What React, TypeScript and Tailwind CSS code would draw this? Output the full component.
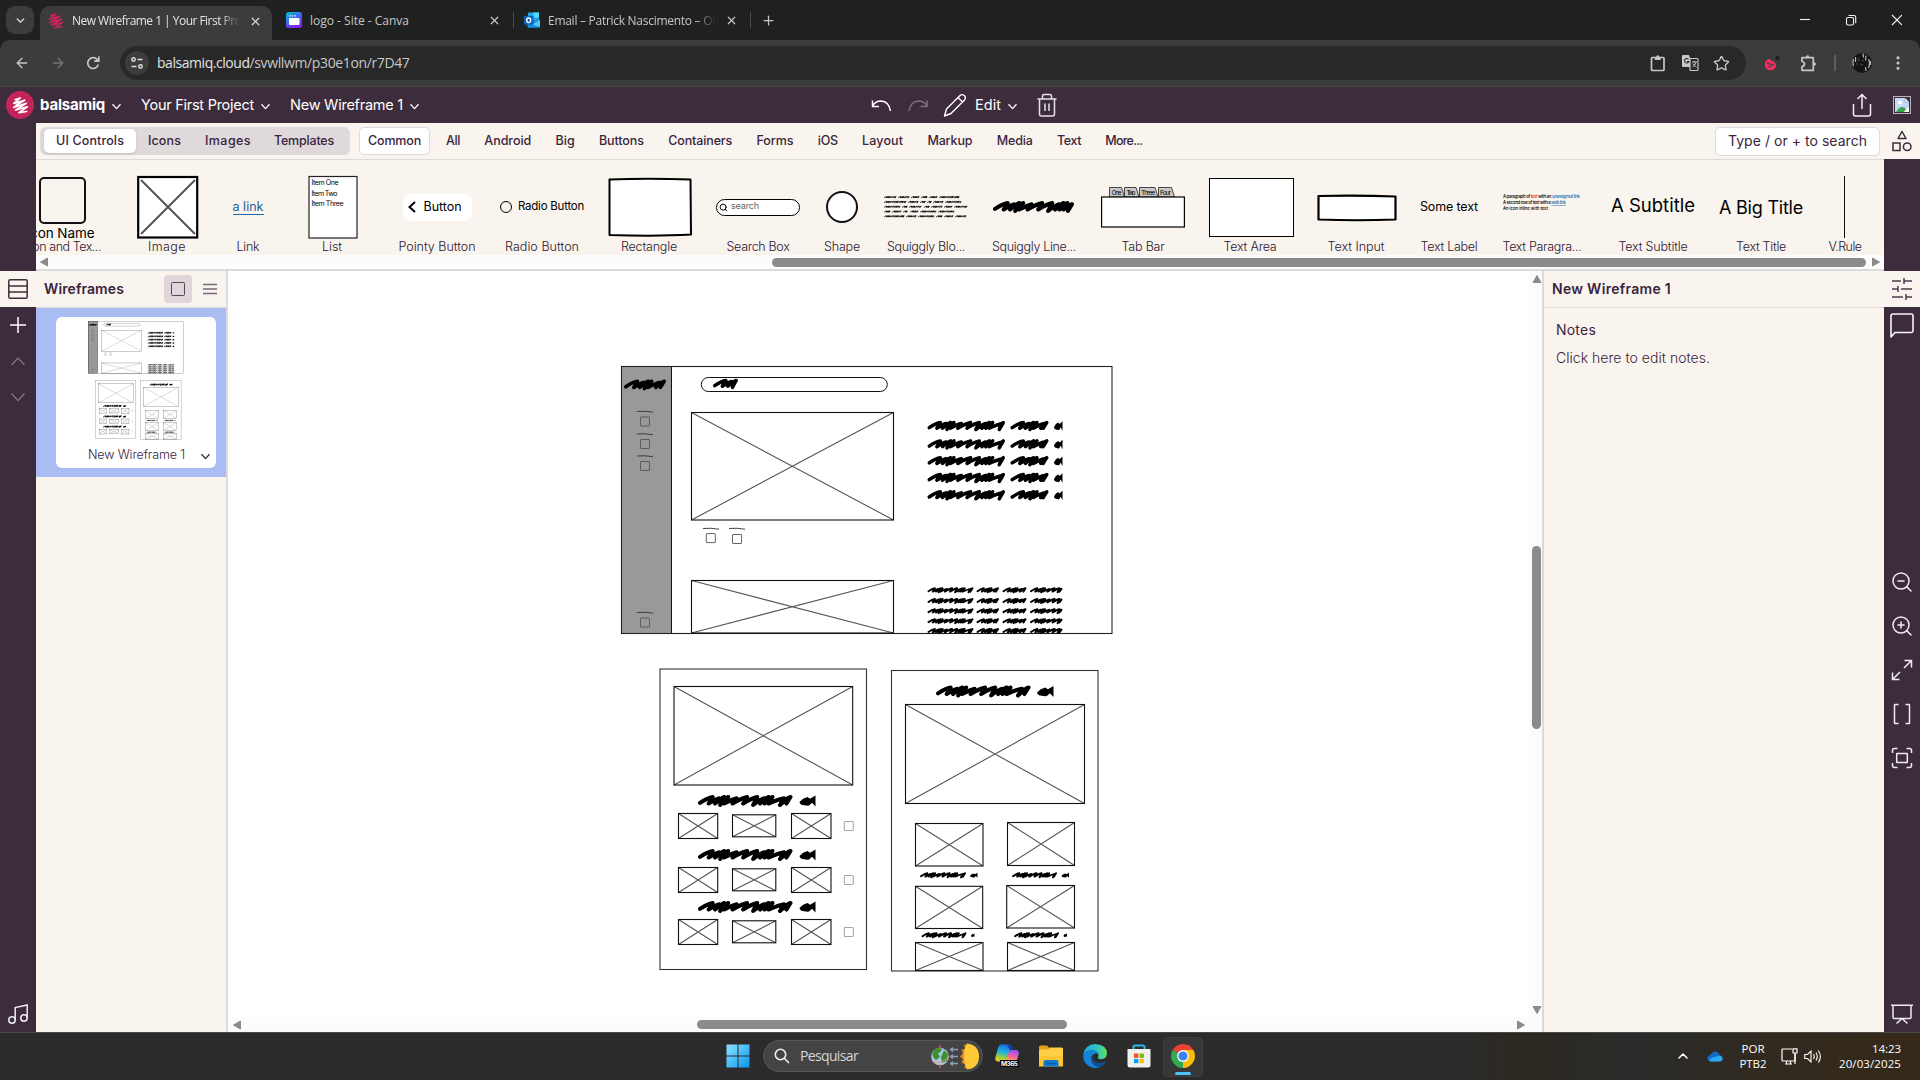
import { useLayoutEffect, useRef, type ReactNode } from "react";
import {
  ArrowLeft, ArrowRight, ChevronDown, ChevronUp, X, Plus, Star, EllipsisVertical,
  ZoomIn, ZoomOut, Search,
} from "lucide-react";

/* Text that is tracked so that it fills exactly w pixels. */
function Txt({ w, className = "", children }: { w: number; className?: string; children: ReactNode }) {
  const ref = useRef<HTMLSpanElement>(null);
  useLayoutEffect(() => {
    const el = ref.current;
    if (!el) return;
    el.style.letterSpacing = "0px";
    const n = (el.textContent || "").length;
    const natural = el.getBoundingClientRect().width;
    el.style.letterSpacing = `${(w - natural) / n}px`;
  }, [w]);
  return (
    <span className={`shrink-0 whitespace-nowrap ${className}`} style={{ width: w }}>
      <span ref={ref} className="inline-block">{children}</span>
    </span>
  );
}

/* ---------- hand drawn primitives ---------- */

function scribble(x: number, y: number, w: number, h: number) {
  const sw = h * 0.33;
  const top = y - h / 2 + sw / 2;
  const bot = y + h / 2 - sw / 2;
  const left = x + sw / 2;
  const right = x + w - sw / 2;
  const steps = [1.25, 0.75, 0.62, 0.5, 0.95, 1.15, 1.1, 0.8, 0.55, 0.5];
  let d = `M${left} ${y + h * 0.16}`;
  let cx = left;
  let i = 0;
  while (cx < right) {
    const s = steps[i % steps.length] * h * 0.85;
    const tx = Math.min(cx + s, right);
    const bx = Math.min(Math.max(tx - h * 0.34, left), right);
    const up = top + (i % 3 === 1 ? h * 0.1 : 0);
    const dn = bot - (i % 4 === 2 ? 0 : h * 0.12);
    d += ` Q${cx + (tx - cx) * 0.6} ${up + h * 0.06} ${tx} ${up} L${bx} ${dn}`;
    cx = tx - h * 0.1;
    if (tx >= right) break;
    i++;
  }
  return { d, sw };
}

function Scribble({ x, y, w, h }: { x: number; y: number; w: number; h: number }) {
  const { d, sw } = scribble(x, y, w, h);
  return <path d={d} fill="none" stroke="#000" strokeWidth={sw} strokeLinecap="round" strokeLinejoin="round" />;
}

/* The word fragment that is cut off at a block's right edge. */
function Stub({ x, y, w, h }: { x: number; y: number; w: number; h: number }) {
  return (
    <path d={`M${x + w} ${y - h / 2}L${x + w} ${y + h / 2}L${x + w * 0.78} ${y + h * 0.15}L${x + w * 0.6} ${y + h * 0.42}Q${x} ${y + h * 0.45} ${x} ${y + h * 0.1}Q${x + w * 0.2} ${y - h * 0.25} ${x + w * 0.5} ${y - h * 0.36}L${x + w * 0.66} ${y - h * 0.2}Z`} />
  );
}

function Pic({ x, y, x2, y2 }: { x: number; y: number; x2: number; y2: number }) {
  return (
    <g fill="none">
      <path d={`M${x} ${y}L${x2} ${y2}M${x2} ${y}L${x} ${y2}`} stroke="#555" strokeWidth="1.1" />
      <rect x={x} y={y} width={x2 - x} height={y2 - y} stroke="#111" strokeWidth="1.1" />
    </g>
  );
}

function Check({ x, y, c = "#555" }: { x: number; y: number; c?: string }) {
  return <rect x={x} y={y} width="9" height="9" rx="0.5" fill="none" stroke={c} strokeWidth="0.9" />;
}

function Dash({ x, y }: { x: number; y: number }) {
  return <path d={`M${x} ${y}Q${x + 8} ${y - 0.8} ${x + 16} ${y + 0.7}`} fill="none" stroke="#333" strokeWidth="0.9" />;
}

function Wireframe() {
  return (
    <g>
      <rect x="621.5" y="366.5" width="490.5" height="267" fill="#fff" />
      <rect x="621.5" y="366.5" width="50" height="267" fill="#999" stroke="#111" strokeWidth="1" />
      <rect x="621.5" y="366.5" width="490.5" height="267" fill="none" stroke="#222" strokeWidth="1.1" />
      <Scribble x={624} y={385} w={42} h={11} />
      {[411.5, 434, 456, 612.5].map((y) => (
        <g key={y}>
          <Dash x={637} y={y} />
          <Check x={640.5} y={y + 5.5} />
        </g>
      ))}
      <rect x="701.3" y="377.5" width="186" height="14" rx="7" fill="#fff" stroke="#111" strokeWidth="1" />
      <Scribble x={713} y={384} w={25} h={10.5} />
      <Pic x={691.5} y={412.5} x2={893.5} y2={520} />
      <Dash x={703} y={528.5} />
      <Check x={706.3} y={533.6} />
      <Dash x={729} y={528.5} />
      <Check x={732.5} y={534.5} />
      <Pic x={691.5} y={580.5} x2={893.5} y2={633} />
      {[426, 444.4, 461.2, 478, 495.3].map((y) => (
        <g key={y}>
          <Scribble x={927.5} y={y} w={77.5} h={10.5} />
          <Scribble x={1010.5} y={y} w={38} h={10.5} />
          <Stub x={1054} y={y} w={8.5} h={9.5} />
        </g>
      ))}
      {[590.3, 601, 611.2, 621.2, 631].map((y) => (
        <g key={y}>
          <Scribble x={927.5} y={y} w={46} h={6} />
          <Scribble x={976.5} y={y} w={22.5} h={6} />
          <Scribble x={1002.5} y={y} w={24} h={6} />
          <Scribble x={1030} y={y} w={32.5} h={6} />
        </g>
      ))}

      <rect x="660" y="669" width="206.5" height="300.5" fill="#fff" stroke="#333" strokeWidth="1.1" />
      <Pic x={674} y={686.5} x2={852.7} y2={785} />
      {[0, 54, 106].map((o) => (
        <g key={o}>
          <Scribble x={698} y={801 + o} w={94.5} h={12} />
          <Stub x={799.5} y={801 + o} w={16} h={11} />
          <Pic x={678.5} y={813.5 + o} x2={717.7} y2={838.5 + o} />
          <Pic x={732.5} y={814.8 + o} x2={775.8} y2={836.8 + o} />
          <Pic x={791.5} y={813.5 + o} x2={831} y2={838.5 + o} />
          <Check x={844.3} y={821.5 + o} c="#999" />
        </g>
      ))}

      <rect x="891.5" y="670.5" width="206.5" height="300.5" fill="#fff" stroke="#333" strokeWidth="1.1" />
      <Scribble x={936} y={691.5} w={94.5} h={12} />
      <Stub x={1037} y={691.5} w={16.5} h={11} />
      <Pic x={905.5} y={704.5} x2={1084.5} y2={803.5} />
      <Pic x={915.5} y={823.5} x2={983} y2={866} />
      <Pic x={1007.5} y={822.5} x2={1074.5} y2={865.5} />
      <Scribble x={920} y={875.3} w={46} h={6} />
      <Stub x={970} y={875.3} w={7.5} h={5} />
      <Scribble x={1012} y={875.3} w={45} h={6} />
      <Stub x={1061.5} y={875.3} w={7.5} h={5} />
      <Pic x={915.5} y={886.3} x2={982.7} y2={928.5} />
      <Pic x={1006.7} y={885.5} x2={1074.5} y2={928} />
      <Scribble x={921.5} y={935.3} w={45} h={6} />
      <Stub x={971} y={935.3} w={3.5} h={4} />
      <Scribble x={1014} y={935.3} w={45} h={6} />
      <Stub x={1063.5} y={935.3} w={3.5} h={4} />
      <Pic x={915.5} y={942.5} x2={983} y2={970.5} />
      <Pic x={1007.5} y={942.5} x2={1074.5} y2={970.5} />
    </g>
  );
}

/* ---------- browser chrome ---------- */

function Mark({ size, color }: { size: number; color: string }) {
  return (
    <svg width={size} height={size} viewBox="0 0 16 16" fill="none" stroke={color} strokeWidth="1.5" strokeLinecap="round" strokeLinejoin="round">
      <path d="M3 2.300L8 .900L1.600 6L12 3L4 7.500M12 3L1.500 9.800L13.500 6L3.500 12.200L14.500 9.200L6.500 14.800L13.800 13.600" />
    </svg>
  );
}

function Canva() {
  return (
    <svg width="16" height="16" viewBox="0 0 16 16">
      <defs>
        <linearGradient id="cv" x1="0" y1="0" x2="0.6" y2="1">
          <stop offset="0" stopColor="#00c4cc" />
          <stop offset="0.5" stopColor="#3a6df0" />
          <stop offset="1" stopColor="#8b1cf5" />
        </linearGradient>
      </defs>
      <rect width="16" height="16" rx="2.500" fill="url(#cv)" />
      <path d="M3.500 3.800h1.300M6 3.800h1.300M8.500 3.800h1.300" stroke="#fff" strokeWidth="1.300" />
      <rect x="3" y="6" width="10.500" height="7" rx="1" fill="#fff" />
    </svg>
  );
}

function Outlook() {
  return (
    <svg width="16" height="16" viewBox="0 0 16 16">
      <rect x="4" y="0.500" width="11" height="9" rx="1" fill="#28a8ea" />
      <rect x="9.500" y="0.500" width="5.500" height="5" fill="#50d9ff" />
      <path d="M3.500 8L16 7.500V14.500Q16 15.700 14.800 15.700H4.700Q3.500 15.700 3.500 14.500Z" fill="#1490df" />
      <path d="M16 8L8 12.500L16 15Z" fill="#50c8f5" />
      <rect x="0" y="3.800" width="9.500" height="9" rx="1" fill="#0a63b8" />
      <ellipse cx="4.700" cy="8.300" rx="2" ry="2.300" fill="none" stroke="#fff" strokeWidth="1.400" />
    </svg>
  );
}

function TabStrip() {
  return (
    <div className="flex h-[40px] items-center bg-[#1f2120] text-[12px] text-[#c7c7c7]">
      <div className="ml-[6px] flex size-[28px] shrink-0 items-center justify-center rounded-[9px] bg-[#3c3c3c] text-[#e3e3e3]">
        <ChevronDown size={13} strokeWidth={2.6} />
      </div>
      <div className="mt-[6px] ml-[6px] flex h-[34px] w-[232px] shrink-0 items-center rounded-t-[10px] bg-[#3c3c3c] pr-[10px] pb-[4px] pl-[8px] text-[#e3e3e3]">
        <Mark size={16} color="#c3245c" />
        <div className="ml-[8px] flex w-[170px] overflow-hidden [mask-image:linear-gradient(90deg,#000_148px,transparent_168px)]">
          <Txt w={187}>New Wireframe 1 | Your First Project</Txt>
        </div>
        <X size={13} strokeWidth={2.2} className="ml-[7px]" />
      </div>
      <div className="ml-[14px]"><Canva /></div>
      <Txt w={99} className="mt-px ml-[8px]">logo - Site - Canva</Txt>
      <X size={13} strokeWidth={2.2} className="ml-[79px]" />
      <div className="ml-[12px] h-[16px] w-px bg-[#4a4b4a]" />
      <div className="ml-[10px]"><Outlook /></div>
      <div className="mt-px ml-[8px] flex w-[168px] overflow-hidden [mask-image:linear-gradient(90deg,#000_146px,transparent_168px)]">
        <Txt w={198}>Email – Patrick Nascimento – Outlook</Txt>
      </div>
      <X size={13} strokeWidth={2.2} className="ml-[9px]" />
      <div className="ml-[12px] h-[16px] w-px bg-[#4a4b4a]" />
      <Plus size={15} strokeWidth={2} className="ml-[10px]" />
      <svg width="110" height="14" viewBox="0 0 110 14" fill="none" stroke="#f2f2f2" strokeWidth="1.100" className="mr-[18px] ml-auto">
        <path d="M8 6.500h10" />
        <rect x="54.500" y="4.500" width="7" height="7.500" rx="1.500" />
        <path d="M56.500 2.500h5.500q1.700 0 1.700 1.700v6" />
        <path d="M100 2l10 10M110 2l-10 10" />
      </svg>
    </div>
  );
}

function AddressBar() {
  return (
    <div className="h-[47px] bg-[#1f2120]">
      <div className="flex h-[47px] items-center rounded-t-[10px] border-b border-[#4b4a4b] bg-[#3c3c3c] text-[#c7c7c7]">
        <ArrowLeft size={16} strokeWidth={2} className="ml-[14px]" />
        <ArrowRight size={16} strokeWidth={2} className="ml-[20px] text-[#757575]" />
        <svg width="14" height="14" viewBox="0 0 14 14" fill="none" stroke="#c7c7c7" strokeWidth="1.700" className="mr-px ml-[20px]">
          <path d="M12.300 8.600A5.400 5.400 0 1 1 11 3.300L12.600 5M12.800 .500V5.200H8.200" />
        </svg>
        <div className="ml-[19px] flex h-[34px] w-[1626px] items-center rounded-full bg-[#282828]">
          <div className="ml-[5px] flex size-[24px] items-center justify-center rounded-full bg-[#3c3c3c]">
            <svg width="14" height="14" viewBox="0 0 14 14" fill="none" stroke="#dcdcdc" strokeWidth="1.500">
              <circle cx="3.500" cy="3.500" r="1.700" />
              <path d="M7.500 3.500h5M1.500 10.500h5" />
              <circle cx="10.500" cy="10.500" r="1.700" />
            </svg>
          </div>
          <Txt w={92.5} className="mb-px ml-[8px] text-[14px] text-[#e3e3e3]">balsamiq.cloud</Txt>
          <Txt w={160} className="mb-px text-[14px]">/svwllwm/p30e1on/r7D47</Txt>
          <svg width="16" height="17" viewBox="0 0 16 17" fill="none" stroke="#c7c7c7" strokeWidth="1.700" className="ml-auto">
            <rect x="1.500" y="2.500" width="12.500" height="13" rx="0.800" />
            <path d="M4.800 2H10.700V5H4.800Z" fill="#c7c7c7" stroke="none" />
            <circle cx="7.750" cy="1.700" r="1.500" fill="#c7c7c7" stroke="none" />
          </svg>
          <svg width="18" height="18" viewBox="0 0 18 18" className="ml-[15px]">
            <path d="M2 1h6l4 12H2Q1 13 1 12V2Q1 1 2 1Z" fill="#c7c7c7" />
            <rect x="9" y="4.500" width="8" height="12" rx="1" fill="#282828" stroke="#c7c7c7" strokeWidth="1.200" />
            <path d="M11 8h5M13.500 7v1.200M15 8.500q-1 3-3.500 4.500M12 9.500q1 2.500 3.500 3.500" stroke="#c7c7c7" fill="none" />
            <path d="M7.500 5.300a2.200 2.200 0 1 0 .4 2.200H6" stroke="#282828" strokeWidth="1.100" fill="none" />
          </svg>
          <Star size={17} strokeWidth={1.9} strokeLinejoin="miter" className="mr-[16px] ml-[14px]" />
        </div>
        <svg width="18" height="18" viewBox="0 0 18 18" className="ml-[17px]">
          <path d="M6.500 4.800a5.800 5.800 0 1 0 6.800 5Q11 9.500 10.500 7Q7.500 7.500 6.500 4.800Z" fill="#fb2b62" />
          <path d="M4.500 8.800l3 1.800M8 10.500l2.500 .500M6 12.500l1.500.500" stroke="#444" strokeWidth="1.400" strokeLinecap="round" />
          <circle cx="14.500" cy="4" r="2.300" fill="#232323" />
        </svg>
        <svg width="19" height="19" viewBox="0 0 19 19" fill="none" stroke="#c7c7c7" strokeWidth="1.700" strokeLinejoin="round" className="ml-[18px]">
          <path d="M3 3.700H14.300V16.300H3V12.500Q5.500 12 5.500 10Q5.500 8 3 7.500Z" />
          <path d="M7 3.500Q7 1.300 8.700 1.300Q10.400 1.300 10.400 3.500ZM14.500 8.300Q17 8.300 17 10Q17 11.700 14.500 11.700Z" fill="#c7c7c7" stroke="none" />
        </svg>
        <div className="ml-[16px] h-[16px] w-[2px] bg-[#5e5e5e]" />
        <svg width="20" height="20" viewBox="0 0 20 20" className="ml-[16px]">
          <circle cx="10" cy="10" r="10" fill="#141414" />
          <path d="M1.500 6q-1 4 0 7M3.500 4v5M11 .500l.500 4M14 2.500l-.500 5M16.500 6q2 4 0 9M18.500 8v4M13.500 14l.500 4" stroke="#b5b5b5" strokeWidth="1.200" fill="none" />
          <path d="M6 5l1 3M10 8l2-1M8 11l3 1M5 10v2" stroke="#4a4a4a" strokeWidth="1.200" />
        </svg>
        <EllipsisVertical size={18} strokeWidth={2.2} className="ml-[17px]" />
      </div>
    </div>
  );
}

/* ---------- application bars ---------- */

function Chev({ className = "" }: { className?: string }) {
  return (
    <svg width="9" height="7" viewBox="0 0 9 7" fill="none" stroke="currentColor" strokeWidth="1.300" className={`shrink-0 ${className}`}>
      <path d="M0.500 1.300L4.500 5.600L8.500 1.300" />
    </svg>
  );
}

function ProjectBar() {
  return (
    <div className="flex h-[36px] items-center bg-[#3d2d3c] text-[14.5px] text-white">
      <div className="ml-[6px] flex size-[28px] shrink-0 items-center justify-center rounded-full bg-[#c3245c]">
        <Mark size={17} color="#fff" />
      </div>
      <Txt w={65} className="ml-[6px] text-[15px] font-bold">balsamiq</Txt>
      <Chev className="mt-[3px] ml-[7px]" />
      <Txt w={113} className="ml-[20px]">Your First Project</Txt>
      <Chev className="mt-[3px] ml-[7px]" />
      <Txt w={113} className="ml-[20px]">New Wireframe 1</Txt>
      <Chev className="mt-[3px] ml-[7px]" />
      <svg width="60" height="16" viewBox="0 0 60 16" fill="none" strokeWidth="1.500" className="ml-[451px]">
        <path d="M2.500 3.500V9.500H9M2.500 9.500Q5 4 11 4Q19 4.500 20.500 14" stroke="#fff" />
        <path d="M57 3.500V9.500H50.500M57 9.500Q54.500 4 48.500 4Q40.500 4.500 39 14" stroke="#7c707b" />
      </svg>
      <svg width="24" height="24" viewBox="0 0 24 24" fill="none" stroke="#fff" strokeWidth="1.400" strokeLinejoin="round" className="ml-[13px]">
        <path d="M1.500 23L3.500 16L17 2.500Q19 .800 21.300 2.500Q23.300 4.500 21.500 7L8 20.500L1.500 23ZM15 4.500L19.500 9" />
      </svg>
      <Txt w={26} className="ml-[8px]">Edit</Txt>
      <Chev className="mt-[3px] ml-[7px]" />
      <svg width="20" height="24" viewBox="0 0 20 24" fill="none" stroke="#e6e1e5" strokeWidth="1.500" className="ml-[20px]">
        <path d="M.500 6H19.500M5.500 6V3Q5.500 1.500 7 1.500H13Q14.500 1.500 14.500 3V6M2.500 6V21Q2.500 23 4.500 23H15.500Q17.500 23 17.500 21V6M8 10.500v7.500M12 10.500v7.500" />
      </svg>
      <svg width="20" height="24" viewBox="0 0 20 24" fill="none" stroke="#f2eff1" strokeWidth="1.500" className="ml-auto">
        <path d="M1.500 11V21Q1.500 23 3.500 23H16.500Q18.500 23 18.500 21V11M10 16V2M5.500 6L10 1.500L14.500 6" />
      </svg>
      <svg width="18" height="18" viewBox="0 0 18 18" className="mr-[9px] ml-[21px]">
        <rect x="0.500" y="0.500" width="17" height="17" fill="none" stroke="#b9b4b9" />
        <path d="M2 2H12L16 6V16H2Z" fill="#c4d7f5" />
        <path d="M12 2V6H16Z" fill="#fff" stroke="#888" strokeWidth=".600" />
        <circle cx="7" cy="6.500" r="2" fill="#fff" />
        <path d="M3 16Q8 8 13 13L11 16Z" fill="#35a746" />
        <path d="M11 16L16 10.500V16Z" fill="#fff" />
      </svg>
    </div>
  );
}

const categories: [string, number][] = [
  ["All", 14], ["Android", 47], ["Big", 19], ["Buttons", 45], ["Containers", 64], ["Forms", 37],
  ["iOS", 20], ["Layout", 41], ["Markup", 45], ["Media", 36], ["Text", 24], ["More...", 37],
];

function CategoryBar() {
  return (
    <div className="flex h-[36px] bg-[#3d2d3c] text-[12.5px] font-medium text-[#3a2440]">
      <div className="ml-[36px] flex flex-1 items-center bg-[#f9f4ed]">
        <div className="ml-[4px] flex h-[28px] w-[310px] items-center rounded-[6px] bg-[#dfd9db]">
          <div className="ml-[4px] flex h-[24px] w-[92px] items-center justify-center rounded-[5px] bg-white shadow-sm">
            <Txt w={68}>UI Controls</Txt>
          </div>
          <Txt w={33} className="ml-[12px]">Icons</Txt>
          <Txt w={46} className="ml-[24px]">Images</Txt>
          <Txt w={60} className="ml-[23px]">Templates</Txt>
        </div>
        <div className="ml-[9px] flex h-[28px] w-[71px] items-center justify-center rounded-[5px] border border-[#dfd9db] bg-white">
          <Txt w={53}>Common</Txt>
        </div>
        <div className="ml-[16px] flex gap-[24.3px]">
          {categories.map(([t, w]) => <Txt key={t} w={w}>{t}</Txt>)}
        </div>
        <div className="ml-auto flex h-[29px] w-[165px] items-center justify-center rounded-[5px] border border-[#dfd9db] bg-white text-[14px] font-normal">
          <Txt w={139} className="mb-px">Type / or + to search</Txt>
        </div>
        <svg width="20" height="22" viewBox="0 0 20 22" fill="none" stroke="#3d2d3c" strokeWidth="1.500" className="mr-[8px] ml-[12px]">
          <path d="M10 1.500L14 8.500H6Z" strokeLinejoin="round" />
          <rect x="1" y="13" width="7" height="7.500" />
          <circle cx="15.200" cy="16.800" r="3.800" />
        </svg>
      </div>
    </div>
  );
}

/* ---------- control library ---------- */

const blockRows = [
  [[0, 12], [14, 11], [27, 8], [37, 6], [45, 8], [55, 20]],
  [[0, 22], [24, 10], [36, 5], [43, 4], [49, 10], [61, 16]],
  [[0, 16], [18, 5], [25, 12], [40, 5], [47, 11], [60, 8], [70, 13]],
  [[0, 6], [8, 9], [19, 4], [26, 8], [36, 16], [54, 16]],
  [[0, 20], [22, 10], [34, 16], [52, 6], [60, 9], [71, 11]],
];

const hand = "Inter, 'Open Sans', sans-serif";

const controls: { label: string; lw: number; w: string; art: ReactNode }[] = [
  {
    label: "Icon and Tex...", lw: 78, w: "w-[84px]",
    art: (
      <div className="flex h-full w-full flex-col items-center">
        <div className="mt-[2px] h-[47px] w-[47px] shrink-0 rounded-[5px] border-2 border-[#111]" />
        <Txt w={68} className="mt-[-1px] mr-[3px] text-[13.5px] text-black">Icon Name</Txt>
      </div>
    ),
  },
  {
    label: "Image", lw: 38, w: "w-[126px]",
    art: (
      <svg width="62" height="64" viewBox="0 0 62 64" className="ml-px">
        <rect x="1.200" y="2" width="59" height="60.500" fill="#fff" stroke="#000" strokeWidth="2.200" />
        <path d="M4 5L58 59M58 5L4 59" stroke="#555" strokeWidth="2" />
      </svg>
    ),
  },
  {
    label: "Link", lw: 23, w: "w-[36px]",
    art: <Txt w={31} className="border-b border-[#1d6aab] text-[12.5px] leading-[15px] text-[#1d5f9b] underline">a link</Txt>,
  },
  {
    label: "List", lw: 20, w: "w-[132px]",
    art: (
      <svg width="50" height="64" viewBox="0 0 50 64" fontFamily={hand} fontSize="7" className="ml-px">
        <rect x="1" y="1.500" width="48" height="61.500" fill="#fff" stroke="#222" strokeWidth="1.200" />
        <text x="3.500" y="10" textLength="27">Item One</text>
        <text x="3.500" y="20.500" textLength="26">Item Two</text>
        <text x="3.500" y="31" textLength="32">Item Three</text>
      </svg>
    ),
  },
  {
    label: "Pointy Button", lw: 77, w: "w-[78px]",
    art: (
      <div className="flex h-[27px] w-[69px] shrink-0 items-center rounded-[8px] bg-white text-black">
        <svg width="8" height="12" viewBox="0 0 8 12" fill="none" stroke="#000" strokeWidth="2" className="ml-[5px]"><path d="M7 1L1.500 6L7 11" /></svg>
        <Txt w={38} className="ml-[8px] text-[12.5px]">Button</Txt>
      </div>
    ),
  },
  {
    label: "Radio Button", lw: 74, w: "w-[132px]",
    art: (
      <div className="flex items-center text-black">
        <div className="size-[12px] rounded-full border-[1.3px] border-black" />
        <Txt w={66} className="ml-[6px] text-[11.5px]">Radio Button</Txt>
      </div>
    ),
  },
  {
    label: "Rectangle", lw: 56, w: "w-[82px]",
    art: (
      <svg width="84" height="60" viewBox="0 0 84 60" className="ml-px shrink-0">
        <path d="M1.500 2.500Q40 1 82.500 2.500L83 57.500Q50 59.500 1.500 58Z" fill="#fff" stroke="#000" strokeWidth="2" strokeLinejoin="round" />
      </svg>
    ),
  },
  {
    label: "Search Box", lw: 63, w: "w-[136px]",
    art: (
      <div className="flex h-[17px] w-[84px] items-center rounded-full border-[1.5px] border-black bg-white">
        <Search size={9} strokeWidth={2.6} className="ml-[2px] text-black" />
        <Txt w={28} className="mb-[2px] ml-[3px] text-[9px] text-[#666]">search</Txt>
      </div>
    ),
  },
  { label: "Shape", lw: 36, w: "w-[32px]", art: <div className="size-[32px] shrink-0 rounded-full border-2 border-[#111] bg-white" /> },
  {
    label: "Squiggly Blo...", lw: 78, w: "w-[136px]",
    art: (
      <svg width="84" height="26" viewBox="0 0 84 26">
        {blockRows.map((r, i) => r.map(([x, w]) => <Scribble key={`${i}-${x}`} x={x} y={3.200 + i * 4.800} w={w + 0.500} h={2.300} />))}
      </svg>
    ),
  },
  {
    label: "Squiggly Line...", lw: 84, w: "w-[80px]",
    art: <svg width="82" height="20" viewBox="0 0 82 20" className="shrink-0"><Scribble x={0} y={10} w={81} h={12} /></svg>,
  },
  {
    label: "Tab Bar", lw: 43, w: "w-[138px]",
    art: (
      <svg width="84" height="42" viewBox="0 0 84 42" fontFamily={hand} fontSize="6.500">
        <g fill="#c8c8c8" stroke="#333" strokeWidth="0.900">
          <path d="M8.500 11V1.500H20.500L23.500 11ZM23.500 11V1.500H35L38 11ZM38.500 11V1.500H54L57 11ZM57.500 11V1.500H70.500L73.500 11Z" />
          <rect x="0.600" y="11" width="82.800" height="30" fill="#fff" stroke="#000" strokeWidth="1.200" />
        </g>
        <text x="10.500" y="8.800" textLength="10">One</text>
        <text x="25.500" y="8.800" textLength="9">Two</text>
        <text x="40" y="8.800" textLength="14">Three</text>
        <text x="59" y="8.800" textLength="11">Four</text>
      </svg>
    ),
  },
  { label: "Text Area", lw: 53, w: "w-[76px]", art: <div className="ml-[2px] h-[59px] w-[85px] shrink-0 border border-black bg-white" /> },
  {
    label: "Text Input", lw: 57, w: "w-[136px]",
    art: (
      <svg width="80" height="28" viewBox="0 0 80 28" className="mt-px ml-px">
        <path d="M1.500 2Q40 1 78.500 2.500L78.500 25.500Q40 27 1.500 25.500Z" fill="#fff" stroke="#000" strokeWidth="2.200" strokeLinejoin="round" />
      </svg>
    ),
  },
  { label: "Text Label", lw: 57, w: "w-[50px]", art: <Txt w={58} className="text-[12.5px] text-black">Some text</Txt> },
  {
    label: "Text Paragra...", lw: 79, w: "w-[136px]",
    art: (
      <svg width="79" height="20" viewBox="0 0 79 20" fontFamily={hand} fontSize="4.300" fontWeight="500" className="mb-[10px]">
        <text x="0" y="6" textLength="77">A paragraph of <tspan fill="#e02020">text</tspan> with an <tspan fill="#1d6aab">unassigned link</tspan></text>
        <text x="0" y="12" textLength="63">A second row of text with a <tspan fill="#1d6aab" textDecoration="underline">web link</tspan></text>
        <text x="0" y="18" textLength="45">An icon inline with text</text>
      </svg>
    ),
  },
  { label: "Text Subtitle", lw: 69, w: "w-[86px]", art: <Txt w={84} className="mb-[2px] text-[18.5px] text-black">A Subtitle</Txt> },
  { label: "Text Title", lw: 50, w: "w-[130px]", art: <Txt w={84} className="text-[18px] text-black">A Big Title</Txt> },
  { label: "V.Rule", lw: 33, w: "w-[38px]", art: <div className="mr-px h-[62px] w-px bg-[#111]" /> },
];

function Arrow({ d }: { d: string }) {
  return (
    <svg width="10" height="10" viewBox="0 0 10 10" fill="#8b8b8b" stroke="#8b8b8b" strokeLinejoin="round" className="shrink-0">
      <path d={d} />
    </svg>
  );
}

const LEFT = "M8.500 1V9L1.500 5Z";
const RIGHT = "M1.500 1V9L8.500 5Z";
const UP = "M1 8.500H9L5 1.500Z";
const DOWN = "M1 1.500H9L5 8.500Z";

function Library() {
  return (
    <div className="flex h-[112px] bg-[#3d2d3c]">
      <div className="mr-[36px] ml-[36px] flex w-[1848px] flex-col overflow-hidden border-t border-b-2 border-[#dedadb] bg-[#f9f4ed]">
        <div className="ml-[-16px] flex h-[95px] shrink-0 pt-[15px]">
          {controls.map((c) => (
            <div key={c.label} className={`flex shrink-0 flex-col items-center ${c.w}`}>
              <div className="flex h-[64px] items-center justify-center self-stretch">{c.art}</div>
              <Txt w={c.lw} className="text-center text-[12.5px] leading-[16px] font-light text-[#2c1633]">{c.label}</Txt>
            </div>
          ))}
        </div>
        <div className="flex h-[14px] shrink-0 items-center bg-[#fcfcfc]">
          <div className="ml-[3px] flex"><Arrow d={LEFT} /></div>
          <div className="ml-[723px] h-[9px] w-[1094px] rounded-full bg-[#8b8b8b]" />
          <div className="ml-[5px] flex"><Arrow d={RIGHT} /></div>
        </div>
      </div>
    </div>
  );
}

/* ---------- body ---------- */

function LeftRail() {
  return (
    <div className="flex w-[36px] flex-col items-center bg-[#3d2d3c] text-[#efecee]">
      <div className="flex h-[36px] w-full items-center justify-center bg-[#f9f4ed]">
        <svg width="20" height="20" viewBox="0 0 20 20" fill="none" stroke="#3d2d3c" strokeWidth="1.500">
          <rect x="0.800" y="0.800" width="18.400" height="18.400" rx="1.500" />
          <path d="M1 7H19M1 13H19" />
        </svg>
      </div>
      <svg width="16" height="90" viewBox="0 0 16 90" fill="none" strokeWidth="1.500" className="mt-[10px]">
        <path d="M8 0V16M0 8H16" stroke="#fff" />
        <path d="M1.500 48L8 41L14.500 48M1.500 76.500L8 83.500L14.500 76.500" stroke="#80747f" strokeWidth="1.300" />
      </svg>
      <svg width="20" height="20" viewBox="0 0 20 20" fill="none" stroke="#efecee" strokeWidth="1.500" className="mt-auto mb-[8px]">
        <circle cx="4" cy="16" r="3.200" />
        <circle cx="16" cy="14" r="3.200" />
        <path d="M7.200 16V3.500L19.200 1V14" />
      </svg>
    </div>
  );
}

function Wireframes() {
  return (
    <div className="flex w-[192px] flex-col border-r-2 border-[#dedadb] bg-[#f9f4ed] text-[#3a2440]">
      <div className="flex h-[37px] shrink-0 items-center border-b border-[#dedadb]">
        <Txt w={80} className="mb-px ml-[8px] text-[14px] font-semibold">Wireframes</Txt>
        <div className="ml-[40px] flex size-[28px] items-center justify-center rounded-[4px] bg-[#dfd6da]">
          <div className="size-[14px] rounded-[1.5px] border-[1.5px] border-[#5a4459]" />
        </div>
        <svg width="14" height="12" viewBox="0 0 14 12" stroke="#75687a" strokeWidth="1.300" className="ml-[11px]"><path d="M0 1.500H14M0 6H14M0 10.500H14" /></svg>
      </div>
      <div className="h-[169px] bg-[#a9bdf3] pt-[9px] pl-[20px]">
        <div className="flex h-[151px] w-[160px] flex-col rounded-[6px] bg-white">
          <svg width="96" height="118.500" viewBox="621 366 492 606" className="mt-[4px] ml-[32px] shrink-0"><Wireframe /></svg>
          <div className="mt-[6px] flex items-center">
            <Txt w={97} className="ml-[32px] text-[12.5px] font-light">New Wireframe 1</Txt>
            <Chev className="mt-[4px] ml-[16px]" />
          </div>
        </div>
      </div>
    </div>
  );
}

function Canvas() {
  return (
    <div className="flex w-[1314px] flex-col bg-white">
      <div className="flex h-[746px]">
        <svg width="1301" height="746" viewBox="228 271 1301 746" className="shrink-0"><Wireframe /></svg>
        <div className="flex w-[13px] flex-col items-center bg-[#fcfcfc] pl-[2px]">
          <div className="mt-[3px] flex"><Arrow d={UP} /></div>
          <div className="mt-[262px] h-[183px] w-[9px] rounded-full bg-[#8b8b8b]" />
          <div className="mt-auto mb-[2px] flex"><Arrow d={DOWN} /></div>
        </div>
      </div>
      <div className="flex h-[15px] items-center bg-[#fcfcfc]">
        <div className="ml-[4px] flex"><Arrow d={LEFT} /></div>
        <div className="ml-[455px] h-[9px] w-[370px] rounded-full bg-[#8b8b8b]" />
        <div className="mr-[16px] ml-auto flex"><Arrow d={RIGHT} /></div>
      </div>
    </div>
  );
}

function Inspector() {
  return (
    <div className="flex w-[342px] flex-col border-l-2 border-[#dedadb] bg-[#f9f4ed] text-[14px] text-[#3a2440]">
      <div className="flex h-[37px] shrink-0 items-center border-b border-[#dedadb]">
        <Txt w={119} className="mb-px ml-[8px] font-semibold">New Wireframe 1</Txt>
      </div>
      <Txt w={40} className="mt-[11px] ml-[12px] leading-[22px]">Notes</Txt>
      <Txt w={154} className="mt-[6px] ml-[12px] leading-[22px] font-light">Click here to edit notes.</Txt>
    </div>
  );
}

function RightRail() {
  return (
    <div className="flex w-[36px] flex-col items-center bg-[#3d2d3c] text-[#efecee]">
      <div className="flex h-[36px] w-full items-center justify-center bg-[#f9f4ed]">
        <svg width="20" height="22" viewBox="0 0 20 22" fill="none" stroke="#4d3b4c" strokeWidth="1.500">
          <path d="M0 3H9M12 3H20M12 0V6M0 11H6M9 11H20M6 8V14M0 19H11M14 19H20M14 16V22" />
        </svg>
      </div>
      <svg width="24" height="26" viewBox="0 0 24 26" fill="none" stroke="#f6f4f6" strokeWidth="1.600" strokeLinejoin="round" className="mt-[6px]">
        <path d="M1 24V3Q1 1 3 1H21Q23 1 23 3V17.500Q23 19.500 21 19.500H5Z" />
      </svg>
      <div className="mt-[231px] flex flex-col items-center gap-[20px]">
        <ZoomOut size={24} strokeWidth={1.5} />
        <ZoomIn size={24} strokeWidth={1.5} />
        <svg width="24" height="24" viewBox="0 0 24 24" fill="none" stroke="currentColor" strokeWidth="1.500">
          <path d="M14 10L21.500 2.500M14.500 2.500H21.500V9.500M10 14L2.500 21.500M2.500 14.500V21.500H9.500" />
        </svg>
        <svg width="24" height="24" viewBox="0 0 24 24" fill="none" stroke="currentColor" strokeWidth="1.500">
          <path d="M8.500 2.500H5Q4.500 2.500 4.500 3V21Q4.500 21.500 5 21.500H8.500M15.500 2.500H19Q19.500 2.500 19.500 3V21Q19.500 21.500 19 21.500H15.500" />
        </svg>
        <svg width="24" height="24" viewBox="0 0 24 24" fill="none" stroke="currentColor" strokeWidth="1.500">
          <path d="M7.500 2.500H4.500Q2.500 2.500 2.500 4.500V7M16.500 2.500H19.500Q21.500 2.500 21.500 4.500V7M7.500 21.500H4.500Q2.500 21.500 2.500 19.500V17M16.500 21.500H19.500Q21.500 21.500 21.500 19.500V17" />
          <rect x="6.700" y="7.500" width="10.600" height="9" rx="0.500" />
        </svg>
      </div>
      <svg width="22" height="22" viewBox="0 0 22 22" fill="none" stroke="currentColor" strokeWidth="1.500" className="mt-auto mb-[7px]">
        <path d="M0 2.200H22M2 2.200V14.500Q2 15.500 3 15.500H19Q20 15.500 20 14.500V2.200M5.500 20.500L11 15.500L16.500 20.500" />
      </svg>
    </div>
  );
}

/* ---------- taskbar ---------- */

function Taskbar() {
  return (
    <div className="flex h-[48px] items-center border-t border-[#4a4a48] bg-[linear-gradient(90deg,#2b2b2b_0%,#2b2b2b_76%,#2e2921_79%,#2a2b2a_85%,#302a20_91%,#352919_100%)] pb-px text-white">
      <svg width="24" height="24" viewBox="0 0 24 24" className="ml-[726px]">
        <defs>
          <linearGradient id="win" x1="0" y1="0" x2="1" y2="1"><stop offset="0" stopColor="#8de3ff" /><stop offset="1" stopColor="#0795ee" /></linearGradient>
        </defs>
        <path d="M.500.500H11.500V11.500H.500ZM12.500.500H23.500V11.500H12.500ZM.500 12.500H11.500V23.500H.500ZM12.500 12.500H23.500V23.500H12.500Z" fill="url(#win)" />
      </svg>
      <div className="ml-[13px] flex h-[32px] w-[220px] items-center rounded-full border border-[#565656] bg-[#444]">
        <svg width="16" height="16" viewBox="0 0 16 16" fill="none" stroke="#eee" strokeWidth="1.600" className="ml-[10px]"><circle cx="6.500" cy="6.500" r="5.200" /><path d="M10.300 10.300L15 15" /></svg>
        <Txt w={58} className="mb-px ml-[10px] text-[14px] text-[#d6d6d6]">Pesquisar</Txt>
        <svg width="52" height="28" viewBox="0 0 52 28" className="mr-[2px] ml-auto">
          <circle cx="12" cy="14.500" r="8.800" fill="#a9c9ea" />
          <path d="M5 9Q9 4 14 6.500Q13 11 10 11L12 15L8 18Q3 15 5 9ZM16 8L20 12L19 19L14 21L13 15Z" fill="#3f8f2d" />
          <path d="M12 3V7M12 22V26" stroke="#ff6a55" strokeWidth="1" />
          <path d="M4 19Q13 23 21 15" stroke="#f58a84" fill="none" />
          <path d="M22.500 7.500H30M22.500 14.500H30M22.500 21.500H30M25 5.500l-2.500 2l2.500 2M25 12.500l-2.500 2l2.500 2M25 19.500l-2.500 2l2.500 2" stroke="#8c9fba" strokeWidth="1.300" fill="none" />
          <path d="M41 2L36 3L37 6.500L33.500 8L35 11.500L32 14.500L35 17L33.500 20.500L37 22.500L36.500 26L41 27Z" fill="#f0861e" />
          <path d="M39 1.500Q51 3 51 14.500Q51 26 39 27.500Q36 21 36 14.500Q36 7 39 1.500Z" fill="#ffc938" />
        </svg>
      </div>
      <svg width="24" height="24" viewBox="0 0 24 24" className="ml-[12px]">
        <defs>
          <linearGradient id="cpa" x1="0.500" y1="0" x2="0.300" y2="1"><stop offset="0" stopColor="#1b6fe8" /><stop offset=".45" stopColor="#20b8d8" /><stop offset=".75" stopColor="#9ace3b" /><stop offset="1" stopColor="#f5c61c" /></linearGradient>
          <linearGradient id="cpb" x1="0.600" y1="0" x2="0.300" y2="1"><stop offset="0" stopColor="#8c54f0" /><stop offset=".6" stopColor="#ee5fa9" /><stop offset="1" stopColor="#ff9a5c" /></linearGradient>
        </defs>
        <path d="M6 .500H14Q17 .500 16 4L12 15Q11 17.500 9 17.500H3Q-.500 17.500 .500 13L3 4Q4 .500 6 .500Z" fill="url(#cpa)" />
        <path d="M13 .500Q17 .500 18 5L15 6L12 2Z" fill="#1540a8" />
        <path d="M17 6H21Q24.500 6 23.700 10L22 16H11L13.500 9Q14.500 6 17 6Z" fill="url(#cpb)" />
        <rect x="5" y="16" width="19" height="7" fill="#0a0a0a" />
        <text x="6" y="22" fontFamily="Inter, sans-serif" fontSize="6.500" fontWeight="700" fill="#fff" textLength="17">M365</text>
      </svg>
      <svg width="24" height="24" viewBox="0 0 24 24" className="ml-[20px]">
        <path d="M0 3Q0 1.500 1.500 1.500H8L11 4.500V8H0Z" fill="#e0a018" />
        <path d="M0 7.500Q0 5.500 2 5.500H9L11 3.500H22.500Q24 3.500 24 5V22H0Z" fill="#ffcf45" />
        <path d="M0 12H24V22.500H0Z" fill="#fdc52f" />
        <path d="M4.500 22.500V18Q4.500 16 6.500 16H17.500Q19.500 16 19.500 18V22.500Z" fill="#0f78cf" />
        <path d="M7 19.500H17" stroke="#0a5ba6" strokeWidth="1.200" />
      </svg>
      <svg width="24" height="24" viewBox="0 0 24 24" className="ml-[20px]">
        <defs>
          <linearGradient id="eg" x1="0" y1="0.300" x2="1" y2="0.300"><stop offset="0" stopColor="#1ea7e4" /><stop offset=".55" stopColor="#2bc4c4" /><stop offset="1" stopColor="#62df5a" /></linearGradient>
        </defs>
        <path d="M.300 10.500Q2 0 12.500 0Q24 .800 24 9.500Q23.500 15 18 15.200Q14.500 15 15 13.500Q16.500 11.500 14.800 9Q12 5.500 7 6.500Q2 7.500 .300 10.500Z" fill="url(#eg)" />
        <path d="M.100 11.500Q1 6.500 7.500 6.300Q13.500 6.500 15 10Q10.500 8 8.500 13Q7.500 21 15 22.500Q17 22.800 17 23Q12.500 25 7 22.700Q0 19 .100 11.500Z" fill="#1583d8" />
        <path d="M8.700 12.500Q10 17.500 14.500 18.800Q19 19.500 22 17.500Q23 17.500 22.500 18.500Q20 22.500 16 23.400Q8.500 22 8.700 12.500Z" fill="#0c4f98" />
      </svg>
      <svg width="24" height="24" viewBox="0 0 24 24" className="ml-[20px]">
        <path d="M6.500 6V3Q6.500 1.500 8 1.500H16Q17.500 1.500 17.500 3V6" fill="none" stroke="#29b6f0" strokeWidth="2" />
        <path d="M.500 5H23.500V21Q23.500 23.500 21 23.500H3Q.500 23.500 .500 21Z" fill="#efefef" />
        <path d="M7 9.500H11.400V13.800H7Z" fill="#f25022" /><path d="M12.500 9.500H16.900V13.800H12.500Z" fill="#7fba00" />
        <path d="M7 14.900H11.400V19.200H7Z" fill="#00a4ef" /><path d="M12.500 14.900H16.900V19.200H12.500Z" fill="#ffb900" />
      </svg>
      <div className="mt-px ml-[12px] flex h-[40px] w-[40px] flex-col items-center rounded-[4px] border border-[#3e3e3e] bg-[#373737] pt-[6px]">
        <svg width="24" height="24" viewBox="0 0 24 24" className="shrink-0">
          <path d="M12 12L1.610 6A12 12 0 0 1 22.390 6Z" fill="#ea4335" />
          <path d="M12 12L22.390 6A12 12 0 0 1 12 24Z" fill="#fbbc05" />
          <path d="M12 12L12 24A12 12 0 0 1 1.610 6Z" fill="#34a853" />
          <path d="M12 6H22.390L17.200 15L12 24L17 14Z" fill="#fbbc05" />
          <path d="M1.610 6L7 15Q9 18 12 18L14 17L12 12L6.500 10Z" fill="#34a853" />
          <circle cx="12" cy="12" r="5.900" fill="#fff" />
          <circle cx="12" cy="12" r="4.600" fill="#3b82f0" />
        </svg>
        <div className="mt-[4px] h-[3px] w-[16px] shrink-0 rounded-full bg-[#4cc2ff]" />
      </div>
      <ChevronUp size={16} strokeWidth={2.2} className="ml-auto" />
      <svg width="16" height="11" viewBox="0 0 16 11" className="ml-[16px]">
        <path d="M4 10.500Q0 10 .300 6.500Q1 4 3.500 4Q5 .500 8.500 .500Q11.500 .800 12.500 4Q16 4.500 15.700 8Q15 10.500 13 10.500Z" fill="#1368c4" />
        <path d="M2 10Q4 5.500 8 6Q12 4 14.500 5.500Q17 9 13 10.500H4Z" fill="#2aa7ee" />
      </svg>
      <div className="ml-[17px] flex w-[26px] flex-col items-center text-[11.5px] leading-[15.500px]">
        <Txt w={23}>POR</Txt>
        <Txt w={27}>PTB2</Txt>
      </div>
      <svg width="17" height="17" viewBox="0 0 17 17" fill="none" stroke="#fff" strokeWidth="1.200" className="ml-[15px]">
        <path d="M11 1H2Q1 1 1 2V12Q1 13 2 13H14V6M4 16H11M5.500 13V16M9.500 13V16" />
        <path d="M12 .800H16V5H12ZM14 5V16" />
      </svg>
      <svg width="18" height="15" viewBox="0 0 18 15" fill="none" stroke="#fff" strokeWidth="1.100" className="ml-[6px]">
        <path d="M.800 5.500V9.500H3.500L7 13V2L3.500 5.500ZM9.500 5Q11 7.500 9.500 10M12 3.500Q14.500 7.500 12 11.500M14.300 1.500Q18.500 7.500 14.300 13.500" />
      </svg>
      <div className="mr-[19px] ml-[17px] flex flex-col items-end text-[11.5px] leading-[15.500px]">
        <Txt w={29}>14:23</Txt>
        <Txt w={62}>20/03/2025</Txt>
      </div>
    </div>
  );
}

export default function App() {
  return (
    <div className="h-[1080px] w-[1920px] overflow-hidden bg-white font-['Open_Sans',sans-serif]">
      <TabStrip />
      <AddressBar />
      <div className="font-[Inter,sans-serif]">
        <ProjectBar />
        <CategoryBar />
        <Library />
        <div className="flex h-[761px]">
          <LeftRail />
          <Wireframes />
          <Canvas />
          <Inspector />
          <RightRail />
        </div>
      </div>
      <Taskbar />
    </div>
  );
}
